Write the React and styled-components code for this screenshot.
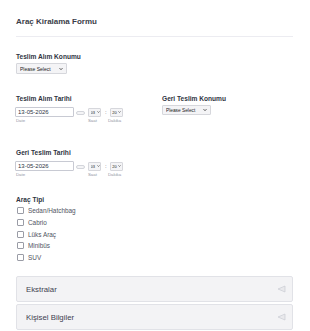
import styled, { createGlobalStyle } from 'styled-components'

const GlobalStyle = createGlobalStyle`
  body {
    margin: 0;
    background: #fff;
    font-family: "Liberation Sans", Arial, sans-serif;
  }
`

const Form = styled.div`
  width: 310px;
  box-sizing: border-box;
  padding: 0 17px 0 16px;
`

const Header = styled.div`
  padding: 17px 0 9px;
  border-bottom: 1px solid #ececf1;
`

const Title = styled.h2`
  margin: 0;
  font-size: 8px;
  line-height: 10px;
  font-weight: 700;
  color: #3a3d48;
`

const Field = styled.div`
  margin-top: ${p => p.$top || 0}px;
`

const Label = styled.div`
  font-size: 6.6px;
  line-height: 8px;
  font-weight: 700;
  color: #2f3442;
  margin-bottom: ${p => p.$gap || 2}px;
`

const Columns = styled.div`
  display: grid;
  grid-template-columns: 146px 1fr;
  margin-top: ${p => p.$top || 0}px;
`

const SelectWrap = styled.div`
  position: relative;
  flex: none;
  width: ${p => p.$w}px;
  height: ${p => p.$h || 11}px;
`

const Select = styled.select`
  display: block;
  appearance: none;
  width: 100%;
  height: 100%;
  margin: 0;
  padding: 0 0 0 ${p => p.$pad || 3}px;
  box-sizing: border-box;
  border: 1px solid #d6d7dc;
  border-radius: 1px;
  background: #f4f4f6;
  font-family: "Liberation Sans", Arial, sans-serif;
  font-size: ${p => p.$size || 5}px;
  color: #222;
  outline: none;
`

const Chevron = styled.svg`
  position: absolute;
  right: ${p => p.$right || 4}px;
  top: 50%;
  transform: translateY(-50%);
  pointer-events: none;
`

const DateRow = styled.div`
  display: flex;
  align-items: center;
`

const DateInput = styled.input`
  display: block;
  flex: none;
  width: 59px;
  height: 10px;
  box-sizing: border-box;
  margin: 0 0 0 -1px;
  padding: 0 0 0 2px;
  border: 1px solid #c8cad3;
  border-radius: 1px;
  font-family: "Liberation Sans", Arial, sans-serif;
  font-size: 6px;
  color: #2c3345;
  background: #fff;
  outline: none;
`

const CalIcon = styled.svg`
  display: block;
  margin: 2px 3px 0 2px;
`

const Colon = styled.span`
  font-size: 6px;
  line-height: 9px;
  color: #555;
  margin: 0 3px 0 4px;
`

const SubRow = styled.div`
  display: flex;
  height: 6px;
  margin-top: 1px;
`

const Sub = styled.span`
  font-size: 4.3px;
  line-height: 6px;
  color: #8f94a3;
  width: ${p => p.$w}px;
  flex: none;
`

const Options = styled.div`
  display: flex;
  flex-direction: column;
`

const Option = styled.label`
  display: flex;
  align-items: center;
  height: 11.7px;
  padding-left: 1px;
  font-size: 6.4px;
  color: #4f5462;
`

const Box = styled.span`
  width: 5px;
  height: 5px;
  border: 1px solid #9a9ca6;
  border-radius: 1px;
  margin-right: 4px;
  background: #fff;
`

const Accordion = styled.div`
  margin-top: 13px;
  display: flex;
  flex-direction: column;
  gap: 2px;
`

const Panel = styled.div`
  height: 26px;
  box-sizing: border-box;
  border: 1px solid #e1e2e7;
  border-radius: 2px;
  background: #f3f3f5;
  display: flex;
  align-items: center;
  justify-content: space-between;
  padding: 0 6px 0 9px;
  font-size: 7.8px;
  color: #3d4150;
`

function Dropdown({ w, h, pad, size, right, cw = 4, ch = 3, value }) {
  return (
    <SelectWrap $w={w} $h={h}>
      <Select $pad={pad} $size={size} defaultValue={value}>
        <option>{value}</option>
      </Select>
      <Chevron $right={right} width={cw} height={ch} viewBox="0 0 8 6">
        <path d="M1 1.2 L4 4.4 L7 1.2" fill="none" stroke="#333" strokeWidth="1.6" />
      </Chevron>
    </SelectWrap>
  )
}

function DateField() {
  return (
    <>
      <DateRow>
        <DateInput defaultValue="13-05-2026" />
        <CalIcon width="9" height="4" viewBox="0 0 18 8">
          <rect x="1" y="1" width="16" height="6" rx="3" fill="#f4f4f6" stroke="#b9bcc6" strokeWidth="1.2" />
        </CalIcon>
        <Dropdown w={13} h={9} pad={1.5} size={4} right={1.5} cw={3} ch={2.2} value="03" />
        <Colon>:</Colon>
        <Dropdown w={13} h={9} pad={1.5} size={4} right={1.5} cw={3} ch={2.2} value="20" />
      </DateRow>
      <SubRow>
        <Sub $w={72}>Date</Sub>
        <Sub $w={20}>Saat</Sub>
        <Sub $w={20}>Dakika</Sub>
      </SubRow>
    </>
  )
}

function Caret() {
  return (
    <svg width="9" height="8" viewBox="0 0 18 16">
      <polygon points="16,2 2,8 16,14" fill="#e9e9ec" stroke="#c9cbd2" strokeWidth="1.4" strokeLinejoin="round" />
    </svg>
  )
}

const carTypes = ['Sedan/Hatchbag', 'Cabrio', 'Lüks Araç', 'Minibüs', 'SUV']

export default function App() {
  return (
    <Form>
      <GlobalStyle />
      <Header>
        <Title>Araç Kiralama Formu</Title>
      </Header>

      <Field $top={16}>
        <Label>Teslim Alım Konumu</Label>
        <Dropdown w={51} value="Please Select" />
      </Field>

      <Columns $top={21}>
        <div>
          <Label $gap={4}>Teslim Alım Tarihi</Label>
          <DateField />
        </div>
        <div>
          <Label>Geri Teslim Konumu</Label>
          <Dropdown w={49} h={10} size={4.8} value="Please Select" />
        </div>
      </Columns>

      <Field $top={25}>
        <Label $gap={4}>Geri Teslim Tarihi</Label>
        <DateField />
      </Field>

      <Field $top={18}>
        <Label $gap={1}>Araç Tipi</Label>
        <Options>
          {carTypes.map(t => (
            <Option key={t}>
              <Box />
              {t}
            </Option>
          ))}
        </Options>
      </Field>

      <Accordion>
        <Panel>
          Ekstralar
          <Caret />
        </Panel>
        <Panel>
          Kişisel Bilgiler
          <Caret />
        </Panel>
      </Accordion>
    </Form>
  )
}
